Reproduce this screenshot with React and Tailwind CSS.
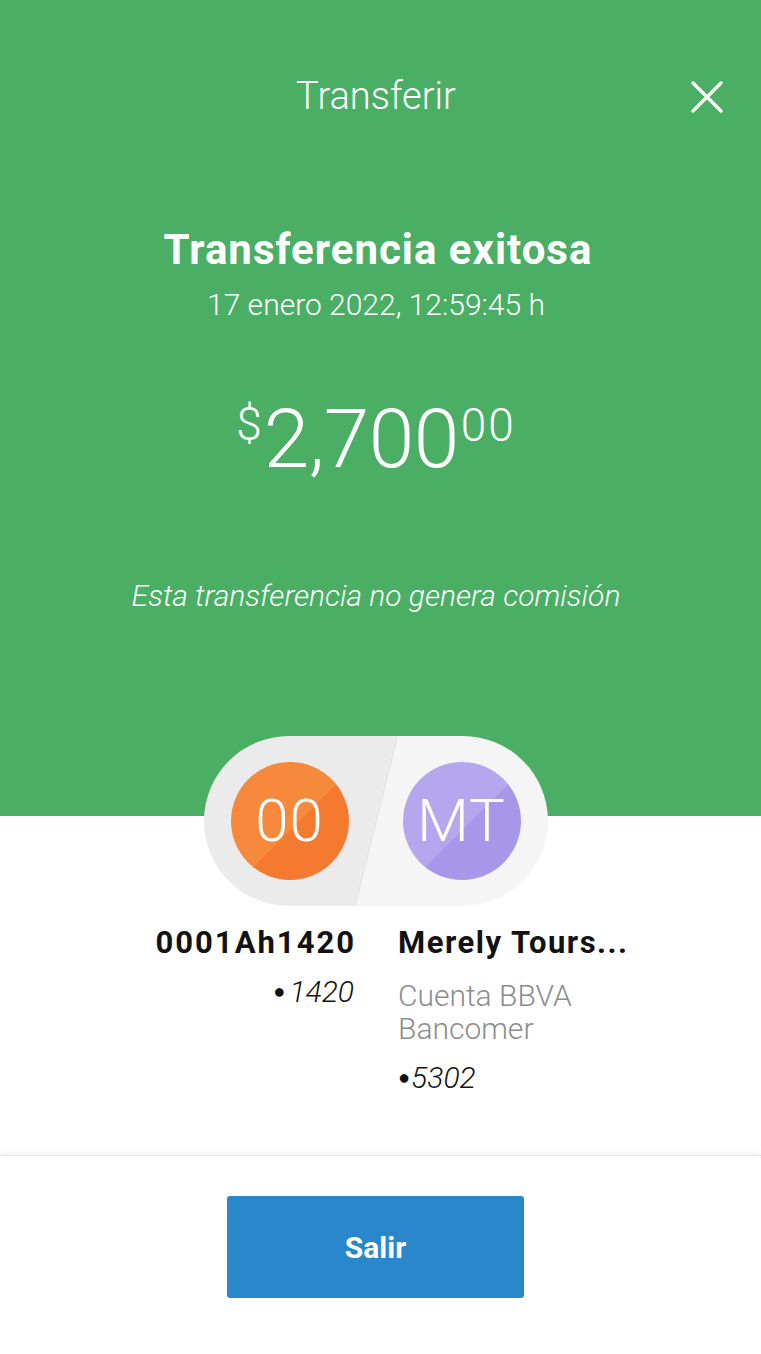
import React from "react";

const font = { fontFamily: "Roboto, 'Liberation Sans', sans-serif" };

const Avatar = ({ initials, tone }) => {
  const bg =
    tone === "orange"
      ? "bg-[linear-gradient(135deg,#f6893c_54%,#f47a2f_54%)]"
      : "bg-[linear-gradient(135deg,#b4a7ee_54%,#a697e8_54%)]";
  return (
    <div
      className={`w-[118px] h-[118px] rounded-full flex items-center justify-center text-white text-[60px] font-light leading-none tracking-[1px] ${bg}`}
    >
      {initials}
    </div>
  );
};

export default function App() {
  return (
    <div className="w-[761px] h-[1354px] bg-white flex flex-col overflow-hidden" style={font}>
      {/* green header */}
      <section className="bg-[#4aaf65] h-[816px] shrink-0 text-white flex flex-col items-center">
        <div className="relative w-full pt-[76px] flex justify-center">
          <h1 className="text-[38px] leading-[40px] font-light -ml-[9px]">Transferir</h1>
          <button className="absolute right-[38px] top-[81px] w-[32px] h-[32px] flex items-center justify-center">
            <svg width="32" height="32" viewBox="0 0 32 32" fill="none">
              <path d="M2 2 L30 30 M30 2 L2 30" stroke="white" strokeWidth="3.2" strokeLinecap="round" />
            </svg>
          </button>
        </div>

        <h2 className="mt-[111px] text-[42px] leading-[46px] font-bold tracking-[1px] -ml-[5px]">
          Transferencia exitosa
        </h2>
        <p className="mt-[16px] text-[30px] leading-[32px] font-light -ml-[9px]">17 enero 2022, 12:59:45 h</p>

        <div className="mt-[77px] flex items-start leading-none font-light -ml-[9px]">
          <span className="text-[46px] mt-[3px] mr-[2px]">$</span>
          <span className="text-[82px] tracking-[-0.5px]">2,700</span>
          <span className="text-[46px] mt-[4px] ml-[2px] tracking-[2px]">00</span>
        </div>

        <p className="mt-[100px] text-[30px] leading-[32px] italic font-light -ml-[9px]">
          Esta transferencia no genera comisión
        </p>
      </section>

      {/* avatars pill */}
      <div className="-mt-[80px] flex justify-center pr-[10px]">
        <div className="relative w-[344px] h-[170px] rounded-full bg-[linear-gradient(104deg,#ebebeb_50%,#dedede_50%,#f5f5f5_50.4%)] flex items-center justify-between px-[27px]">
          <Avatar initials="00" tone="orange" />
          <Avatar initials="MT" tone="purple" />
        </div>
      </div>

      {/* accounts */}
      <div className="mt-[19px] grid grid-cols-[354px_1fr] gap-x-[44px]">
        <div className="text-right">
          <p className="text-[31px] leading-[36px] font-bold tracking-[2px] text-[#121212] -mr-[2px]">
            0001Ah1420
          </p>
          <p className="mt-[14px] text-[30px] leading-[32px] italic font-light text-[#121212]">
            <span className="not-italic text-[20px] align-[4px] mr-[4px]">●</span>1420
          </p>
        </div>
        <div>
          <p className="text-[31px] leading-[36px] font-bold tracking-[1.5px] text-[#121212]">Merely Tours...</p>
          <p className="mt-[18px] text-[30px] leading-[33px] text-[#8c8c8c] font-light">
            Cuenta BBVA
            <br />
            Bancomer
          </p>
          <p className="mt-[16px] text-[30px] leading-[32px] italic font-light text-[#121212]">
            <span className="not-italic text-[20px] align-[4px] mr-[1px]">●</span>5302
          </p>
        </div>
      </div>

      {/* footer */}
      <footer className="mt-auto h-[199px] border-t border-[#e2e2e2] shadow-[0_-3px_5px_rgba(0,0,0,0.05)] pt-[40px]">
        <button className="ml-[227px] w-[297px] h-[102px] rounded-[3px] bg-[#2a87cb] text-white text-[30px] font-bold">
          Salir
        </button>
      </footer>
    </div>
  );
}
